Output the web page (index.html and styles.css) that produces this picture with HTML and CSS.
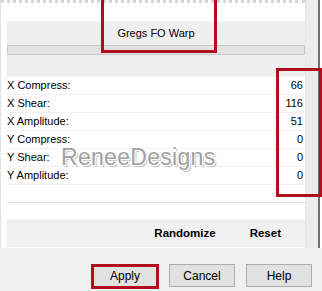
FILE: index.html
```html
<!DOCTYPE html>
<html lang="en">
<head>
    <meta charset="UTF-8">
    <title>Gregs FO Warp</title>
    <link rel="stylesheet" href="styles.css">
</head>
<body>
    <div class="window">
        <div class="main">
            <div class="panel">
                <div class="header">
                    <div class="title">Gregs FO Warp</div>
                    <div class="bar"></div>
                </div>

                <div class="rows">
                    <div class="row"><span>X Compress:</span><span>66</span></div>
                    <div class="row"><span>X Shear:</span><span>116</span></div>
                    <div class="row"><span>X Amplitude:</span><span>51</span></div>
                    <div class="row"><span>Y Compress:</span><span>0</span></div>
                    <div class="row"><span>Y Shear:</span><span>0</span></div>
                    <div class="row"><span>Y Amplitude:</span><span>0</span></div>
                    <div class="row"></div>
                </div>

                <div class="tools">
                    <span class="tool">Randomize</span>
                    <span class="tool">Reset</span>
                </div>
            </div>
            <div class="strip"></div>
        </div>

        <div class="buttons">
            <button class="btn default">Apply</button>
            <button class="btn">Cancel</button>
            <button class="btn">Help</button>
        </div>

        <div class="watermark">ReneeDesigns</div>

        <div class="mark mark-title"></div>
        <div class="mark mark-values"></div>
        <div class="mark mark-apply"></div>
    </div>
</body>
</html>
```

FILE: styles.css
```css
body {
    margin: 0;
    width: 322px;
    height: 291px;
    overflow: hidden;
    background: #ffffff;
    font-family: "Liberation Sans", Arial, sans-serif;
    font-size: 11px;
    color: #000;
}
.window {
    position: relative;
    height: 291px;
    display: flex;
    flex-direction: column;
}
.main {
    display: flex;
    height: 248px;
}
.panel {
    width: 306px;
    border-top: 3px dotted #d6d6d6;
    border-left: 1px solid #e2e2e2;
    border-right: 1px solid #e6e6e6;
    padding: 18px 0 0 6px;
    box-sizing: border-box;
}
.strip {
    width: 16px;
    background: linear-gradient(to right, #ececec 0, #ececec 12px, #707070 12px, #707070 14px, #fff 14px);
}
.header {
    width: 298px;
    height: 56px;
    background: #efefef;
    box-sizing: border-box;
}
.title {
    text-align: center;
    height: 24px;
    line-height: 24px;
    font-size: 11px;
}
.bar {
    height: 10px;
    background: #e3e3e3;
    border: 1px solid #c9c9c9;
    box-sizing: border-box;
}
.rows {
    width: 298px;
}
.row {
    display: flex;
    justify-content: space-between;
    height: 18px;
    line-height: 17px;
    border-bottom: 1px solid #f1f1f1;
    box-sizing: border-box;
    padding-right: 2px;
}
.row:last-child {
    border-bottom: 1px solid #e0e0e0;
}
.tools {
    width: 298px;
    height: 28px;
    margin-top: 16px;
    background: #f0f0f0;
    display: flex;
    justify-content: flex-end;
    align-items: center;
    gap: 34px;
    padding-right: 24px;
    box-sizing: border-box;
    font-weight: bold;
    font-size: 11.5px;
}
.buttons {
    flex: 1;
    background: #f0f0f0;
    display: flex;
    justify-content: flex-end;
    align-items: flex-start;
    gap: 11px;
    padding: 16px 10px 0 0;
}
.btn {
    width: 66px;
    height: 23px;
    background: #e1e1e1;
    border: 1px solid #adadad;
    font-family: "Liberation Sans", Arial, sans-serif;
    font-size: 12px;
    padding: 0;
}
.btn.default {
    border: 1px solid #0078d7;
}
.watermark {
    position: absolute;
    left: 61px;
    top: 144px;
    font-size: 23px;
    color: #a2a2a2;
    letter-spacing: 0.3px;
    text-shadow: 1px 1px 0 #fff, -1px -1px 0 #fff, 1px -1px 0 #fff, -1px 1px 0 #fff, 2px 2px 1px #bbb;
}
.mark {
    position: absolute;
    border: 3px solid #b20f1e;
    box-sizing: border-box;
}
.mark-title {
    left: 101px;
    top: 0;
    width: 116px;
    height: 53px;
    border-top: none;
}
.mark-values {
    left: 276px;
    top: 68px;
    width: 46px;
    height: 129px;
}
.mark-apply {
    left: 91px;
    top: 264px;
    width: 68px;
    height: 25px;
}
```
